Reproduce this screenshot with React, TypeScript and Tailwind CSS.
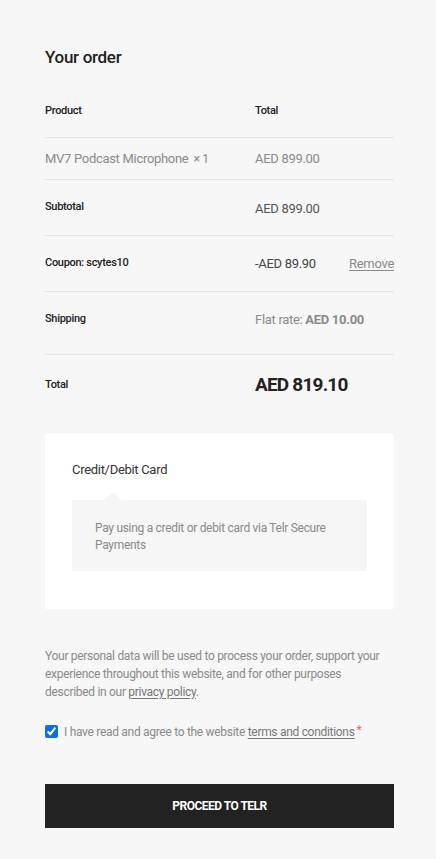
const font = { fontFamily: 'Roboto, "Noto Sans", sans-serif' };

function Row({ label, children, tall }: { label: string; children: React.ReactNode; tall?: boolean }) {
  return (
    <div className={`flex items-center border-b border-[#e6e6e6] ${tall ? 'h-[63px] pb-[8px]' : 'h-[56px]'}`}>
      <div className="w-[210px] text-[11px] font-medium text-[#222]">{label}</div>
      <div className="flex-1">{children}</div>
    </div>
  );
}

export default function App() {
  return (
    <div className="min-h-[859px] bg-[#f7f7f7] pl-[45px] pr-[42px] pt-[46px] pb-[30px] tracking-[-0.3px]" style={font}>
      <h3 className="text-[17px] font-medium text-[#222] leading-[22px]">Your order</h3>

      {/* order table */}
      <div className="mt-[22px]">
        <div className="flex items-center h-[48px] pb-[4px] border-b border-[#e6e6e6]">
          <div className="w-[210px] text-[11px] font-medium text-[#222]">Product</div>
          <div className="text-[11px] font-medium text-[#222]">Total</div>
        </div>
        <div className="flex items-center h-[42px] border-b border-[#e6e6e6] text-[13px] text-[#8a8a8a]">
          <div className="w-[210px]">
            MV7 Podcast Microphone <span className="ml-0.5 text-[12px]">× 1</span>
          </div>
          <div>AED 899.00</div>
        </div>
        <Row label="Subtotal">
          <span className="text-[13px] text-[#555]">AED 899.00</span>
        </Row>
        <Row label="Coupon: scytes10">
          <div className="flex justify-between text-[13px]">
            <span className="text-[#444]">-AED 89.90</span>
            <a className="text-[#8a8a8a] underline underline-offset-2">Remove</a>
          </div>
        </Row>
        <Row label="Shipping" tall>
          <span className="text-[13px] text-[#8a8a8a]">
            Flat rate: <b className="font-bold">AED 10.00</b>
          </span>
        </Row>
        <div className="flex items-center h-[60px]">
          <div className="w-[210px] text-[11px] font-medium text-[#222]">Total</div>
          <div className="text-[19px] font-bold text-[#222] tracking-[-0.8px]">AED 819.10</div>
        </div>
      </div>

      {/* payment box */}
      <div className="mt-[19px] bg-white px-[27px] pt-[26px] pb-[38px]">
        <div className="text-[13px] text-[#333]">Credit/Debit Card</div>
        <div className="relative mt-[20px] bg-[#f6f6f6] px-[23px] pt-[20px] pb-[17px] text-[12px] leading-[17px] text-[#8a8a8a]">
          <span className="absolute -top-[8px] left-[32px] w-0 h-0 border-l-[9px] border-r-[9px] border-b-[8px] border-l-transparent border-r-transparent border-b-[#f6f6f6]" />
          Pay using a credit or debit card via Telr Secure Payments
        </div>
      </div>

      <p className="mt-[38px] pr-[10px] text-[12px] leading-[18px] text-[#8a8a8a]">
        Your personal data will be used to process your order, support your experience throughout this website, and
        for other purposes described in our <a className="text-[#777] underline underline-offset-2">privacy policy</a>.
      </p>

      <label className="mt-[22px] flex items-center text-[12px] text-[#8a8a8a]">
        <input type="checkbox" defaultChecked className="w-[13px] h-[13px] m-0 mr-[6px] accent-[#0b6ee8]" />
        I have read and agree to the website&nbsp;
        <a className="text-[#777] underline underline-offset-2">terms and conditions</a>
        <span className="ml-[2px] text-[#e26a6a] -mt-1">*</span>
      </label>

      <button className="mt-[43px] w-full h-[44px] bg-[#222] text-white text-[12px] font-bold uppercase tracking-[-0.5px]">
        Proceed to Telr
      </button>
    </div>
  );
}
